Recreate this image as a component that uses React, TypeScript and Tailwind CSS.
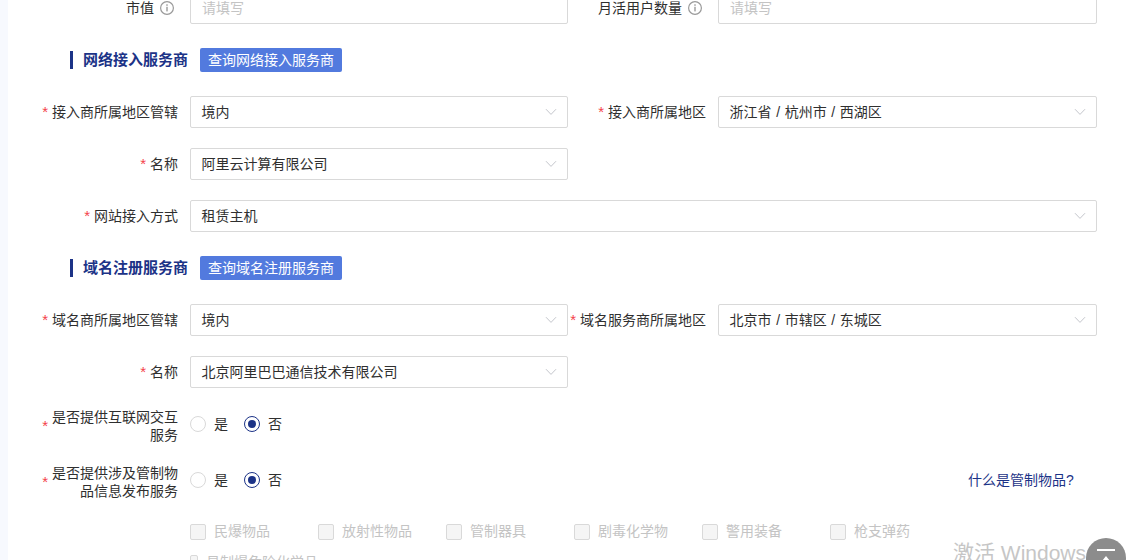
import React from "react";

const font = "font-['Liberation_Sans','Noto_Sans_CJK_SC',sans-serif]";

function Info() {
  return (
    <svg width="14" height="14" viewBox="0 0 14 14" className="ml-[6px] mr-1 shrink-0" fill="none">
      <circle cx="7" cy="7" r="6.4" stroke="#9a9a9a" strokeWidth="1.2" />
      <rect x="6.3" y="5.8" width="1.4" height="4.6" fill="#9a9a9a" />
      <rect x="6.3" y="3.3" width="1.4" height="1.5" fill="#9a9a9a" />
    </svg>
  );
}

function Chevron() {
  return (
    <svg width="12" height="8" viewBox="0 0 12 8" fill="none" className="shrink-0">
      <path d="M1 1.2 L6 6.4 L11 1.2" stroke="#c4c6cc" strokeWidth="1" />
    </svg>
  );
}

function Label({ text, req, info, w }: { text: string; req?: boolean; info?: boolean; w: string }) {
  return (
    <div className={`${w} shrink-0 flex items-center justify-end pr-3 text-[14px] text-[#2f2f2f]`}>
      {req && <span className="mr-1 text-[#f43f4a] text-[15px]">*</span>}
      <span>{text}</span>
      {info && <Info />}
    </div>
  );
}

function Select({ value, w }: { value: string; w: string }) {
  return (
    <div className={`${w} h-8 shrink-0 flex items-center justify-between pl-[10.5px] pr-[10px] border border-[#d9d9d9] rounded-[2px] bg-white text-[14px] text-[#2f2f2f] [word-spacing:0.75px]`}>
      <span>{value}</span>
      <Chevron />
    </div>
  );
}

function Input({ w }: { w: string }) {
  return (
    <div className={`${w} h-8 shrink-0 flex items-center pl-[11px] border border-[#d9d9d9] rounded-[2px] bg-white text-[14px] text-[#c4c4c4]`}>
      请填写
    </div>
  );
}

function Heading({ title, button }: { title: string; button: string }) {
  return (
    <div className="flex items-center h-6 pl-[62px]">
      <div className="w-[3px] h-[18px] bg-[#1c3387]" />
      <div className="ml-[10px] text-[15px] font-bold text-[#1c3387]">{title}</div>
      <div className="ml-3 h-6 w-[142px] flex items-center justify-center rounded-[2px] bg-[#527ade] text-white text-[14px]">
        {button}
      </div>
    </div>
  );
}

function Radio({ on, label }: { on?: boolean; label: string }) {
  return (
    <div className="flex items-center w-[54px]">
      <div className={`w-4 h-4 rounded-full border flex items-center justify-center ${on ? "border-[#1c3387]" : "border-[#d9d9d9]"}`}>
        {on && <div className="w-2 h-2 rounded-full bg-[#1c3387]" />}
      </div>
      <span className="ml-2 text-[14px] text-[#2f2f2f]">{label}</span>
    </div>
  );
}

function RadioRow({ lines, link }: { lines: string[]; link?: string }) {
  return (
    <div className="flex items-center h-9">
      <div className="w-[182px] shrink-0 pr-3 mt-[3px] flex items-center justify-end text-[14px] leading-[18px] text-[#2f2f2f]">
        <span className="mr-1 text-[15px] text-[#f43f4a]">*</span>
        <div className="w-[126px] text-right">
          {lines.map((l) => (
            <div key={l}>{l}</div>
          ))}
        </div>
      </div>
      <Radio label="是" />
      <Radio on label="否" />
      {link && <span className="ml-[670px] text-[14px] text-[#1c3387] whitespace-nowrap">{link}</span>}
    </div>
  );
}

function Check({ label }: { label: string }) {
  return (
    <div className="w-32 flex items-center">
      <div className="w-4 h-4 rounded-[2px] border border-[#d9d9d9] bg-[#f5f5f5]" />
      <span className="ml-2 text-[14px] text-[#c4c4c4] whitespace-nowrap">{label}</span>
    </div>
  );
}

export default function App() {
  return (
    <div className={`${font} relative h-[560px] w-[1140px] overflow-hidden bg-white flex`}>
      <div className="w-2 shrink-0 bg-[#f7f9fe]" />
      <div className="flex-1 min-w-0">
        <div className="mt-[-8px] flex h-8">
          <Label text="市值" info w="w-[182px]" />
          <Input w="w-[378px]" />
          <Label text="月活用户数量" info w="w-[150px]" />
          <Input w="w-[379px]" />
        </div>
        <div className="mt-6">
          <Heading title="网络接入服务商" button="查询网络接入服务商" />
        </div>
        <div className="mt-6 flex h-8">
          <Label text="接入商所属地区管辖" req w="w-[182px]" />
          <Select value="境内" w="w-[378px]" />
          <Label text="接入商所属地区" req w="w-[150px]" />
          <Select value="浙江省 / 杭州市 / 西湖区" w="w-[379px]" />
        </div>
        <div className="mt-5 flex h-8">
          <Label text="名称" req w="w-[182px]" />
          <Select value="阿里云计算有限公司" w="w-[378px]" />
        </div>
        <div className="mt-5 flex h-8">
          <Label text="网站接入方式" req w="w-[182px]" />
          <Select value="租赁主机" w="w-[907px]" />
        </div>
        <div className="mt-6">
          <Heading title="域名注册服务商" button="查询域名注册服务商" />
        </div>
        <div className="mt-6 flex h-8">
          <Label text="域名商所属地区管辖" req w="w-[182px]" />
          <Select value="境内" w="w-[378px]" />
          <Label text="域名服务商所属地区" req w="w-[150px]" />
          <Select value="北京市 / 市辖区 / 东城区" w="w-[379px]" />
        </div>
        <div className="mt-5 flex h-8">
          <Label text="名称" req w="w-[182px]" />
          <Select value="北京阿里巴巴通信技术有限公司" w="w-[378px]" />
        </div>
        <div className="mt-[18px]">
          <RadioRow lines={["是否提供互联网交互", "服务"]} />
        </div>
        <div className="mt-5">
          <RadioRow lines={["是否提供涉及管制物", "品信息发布服务"]} link="什么是管制物品?" />
        </div>
        <div className="mt-[23px] pl-[182px] flex flex-wrap w-[1000px] gap-y-[10px]">
          {["民爆物品", "放射性物品", "管制器具", "剧毒化学物", "警用装备", "枪支弹药", "易制爆危险化学品"].map((t) => (
            <Check key={t} label={t} />
          ))}
        </div>
      </div>
      <div className="absolute left-[953px] top-[539px] text-[21px] leading-[28px] text-[#c6c6c6] whitespace-nowrap">激活 Windows</div>
      <div className="absolute left-[1086px] top-[538px] w-10 h-10 rounded-full bg-[#8c8c8c] flex flex-col items-center pt-[11px]">
        <div className="w-[18px] h-[2px] bg-white" />
        <svg width="10" height="10" viewBox="0 0 10 10" className="mt-[4px]">
          <path d="M5 1 L9 6 H6.2 V10 H3.8 V6 H1 Z" fill="#fff" />
        </svg>
      </div>
    </div>
  );
}
